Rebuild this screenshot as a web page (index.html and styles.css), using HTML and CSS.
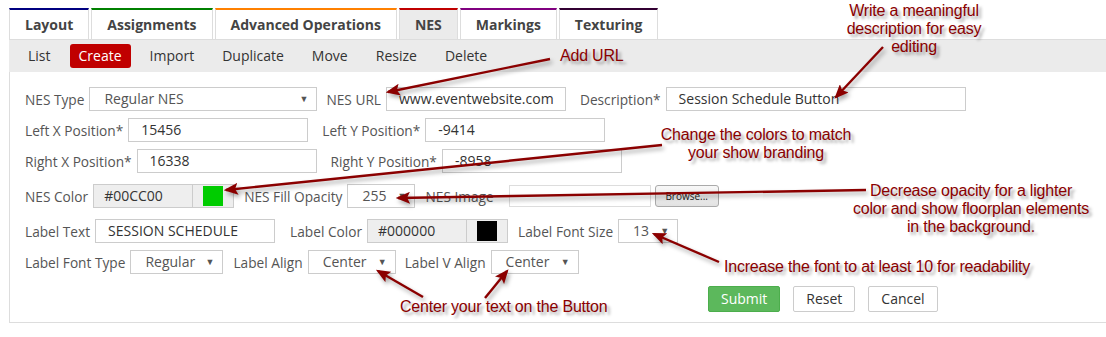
FILE: index.html
```html
<!DOCTYPE html>
<html lang="en">
<head>
    <meta charset="UTF-8">
    <meta name="viewport" content="width=device-width, initial-scale=1.0">
    <title>NES - Create</title>
    <link rel="stylesheet" href="styles.css">
</head>
<body>
    <div id="page">
        <div class="tabs">
            <div class="tab tab-layout">Layout</div>
            <div class="tab tab-assign">Assignments</div>
            <div class="tab tab-adv">Advanced Operations</div>
            <div class="tab tab-nes active">NES</div>
            <div class="tab tab-mark">Markings</div>
            <div class="tab tab-tex">Texturing</div>
        </div>

        <div class="subnav">
            <span class="sub-item">List</span>
            <span class="sub-item current">Create</span>
            <span class="sub-item">Import</span>
            <span class="sub-item">Duplicate</span>
            <span class="sub-item">Move</span>
            <span class="sub-item">Resize</span>
            <span class="sub-item">Delete</span>
        </div>

        <div class="panel">
            <div class="row">
                <label>NES Type</label>
                <div class="select w-type"><span>Regular NES</span><i class="caret">&#9660;</i></div>
                <label>NES URL</label>
                <div class="input w-url">www.eventwebsite.com</div>
                <label>Description*</label>
                <div class="input w-desc">Session Schedule Button</div>
            </div>

            <div class="row">
                <label>Left X Position*</label>
                <div class="input w-pos">15456</div>
                <label>Left Y Position*</label>
                <div class="input w-pos">-9414</div>
            </div>

            <div class="row row-gap">
                <label>Right X Position*</label>
                <div class="input w-pos">16338</div>
                <label>Right Y Position*</label>
                <div class="input w-pos">-8958</div>
            </div>

            <div class="row row-gap">
                <label>NES Color</label>
                <div class="color-box">
                    <span class="color-val">#00CC00</span>
                    <span class="color-cell"><i class="swatch green"></i></span>
                </div>
                <label>NES Fill Opacity</label>
                <div class="select w-opacity"><span>255</span><i class="caret">&#9660;</i></div>
                <label class="wide">NES Image</label>
                <div class="file-box"></div>
                <span class="browse">Browse...</span>
            </div>

            <div class="row">
                <label>Label Text</label>
                <div class="input w-text">SESSION SCHEDULE</div>
                <label>Label Color</label>
                <div class="color-box">
                    <span class="color-val">#000000</span>
                    <span class="color-cell"><i class="swatch black"></i></span>
                </div>
                <label>Label Font Size</label>
                <div class="select w-size"><span>13</span><i class="caret">&#9660;</i></div>
            </div>

            <div class="row">
                <label>Label Font Type</label>
                <div class="select w-ftype"><span>Regular</span><i class="caret">&#9660;</i></div>
                <label>Label Align</label>
                <div class="select w-align"><span>Center</span><i class="caret">&#9660;</i></div>
                <label>Label V Align</label>
                <div class="select w-align"><span>Center</span><i class="caret">&#9660;</i></div>
            </div>

            <div class="actions">
                <span class="btn btn-submit">Submit</span>
                <span class="btn">Reset</span>
                <span class="btn">Cancel</span>
            </div>
        </div>
    </div>

    <!-- help notes drawn over the form -->
    <svg class="arrows" width="1106" height="337" viewBox="0 0 1106 337">
        <defs>
            <marker id="head" markerWidth="6" markerHeight="5" refX="5" refY="2.5" orient="auto" markerUnits="strokeWidth">
                <path d="M0,0 L6,2.5 L0,5 L1.2,2.5 Z" fill="#8b0000"/>
            </marker>
        </defs>
        <g stroke="#8b0000" stroke-width="2.4" fill="none" marker-end="url(#head)">
            <line x1="550" y1="59" x2="388" y2="92"/>
            <line x1="883" y1="47" x2="836" y2="97"/>
            <line x1="662" y1="145" x2="226" y2="190"/>
            <line x1="866" y1="190" x2="398" y2="198"/>
            <line x1="719" y1="262" x2="654" y2="234"/>
            <line x1="423" y1="297" x2="378" y2="271"/>
            <line x1="485" y1="298" x2="507" y2="271"/>
        </g>
    </svg>

    <div class="note note-url">Add URL</div>
    <div class="note note-desc">Write a meaningful<br>description for easy<br>editing</div>
    <div class="note note-color">Change the colors to match<br>your show branding</div>
    <div class="note note-opacity">Decrease opacity for a lighter<br>color and show floorplan elements<br>in the background.</div>
    <div class="note note-font">Increase the font to at least 10 for readability</div>
    <div class="note note-center">Center your text on the Button</div>
</body>
</html>
```

FILE: styles.css
```css
body {
    font-family: 'Open Sans', 'Noto Sans', sans-serif;
    font-size: 14px;
    color: #333;
    background-color: #fff;
    margin: 0;
    padding: 0;
    position: relative;
    width: 1106px;
    height: 337px;
    overflow: hidden;
}

#page {
    padding: 8px 0 0 9px;
}

/* top tabs */
.tabs {
    display: flex;
    gap: 2px;
}

.tab {
    height: 29px;
    line-height: 29px;
    padding: 0 15px;
    font-weight: bold;
    color: #444;
    background-color: #fff;
    border-top: 2px solid #000;
    border-left: 1px solid #ddd;
    border-right: 1px solid #ddd;
}

.tab.active {
    background-color: #ebebeb;
}

.tab-layout { border-top-color: #000080; }
.tab-assign { border-top-color: #008000; }
.tab-adv { border-top-color: #ff8000; }
.tab-nes { border-top-color: #c00000; }
.tab-mark { border-top-color: #800080; }
.tab-tex { border-top-color: #330033; }

/* sub navigation */
.subnav {
    display: flex;
    align-items: center;
    gap: 10px;
    height: 32px;
    padding-left: 10px;
    background-color: #ebebeb;
    border-top: 1px solid #ddd;
}

.sub-item {
    padding: 0 9px;
    height: 24px;
    line-height: 24px;
    color: #333;
}

.sub-item.current {
    background-color: #c00000;
    color: #fff;
    border-radius: 3px;
}

/* form panel */
.panel {
    border-left: 1px solid #ddd;
    border-bottom: 1px solid #ddd;
    padding: 15px 0 10px 15px;
}

.row {
    display: flex;
    align-items: center;
    height: 24px;
    margin-bottom: 7px;
}

.row-gap {
    margin-bottom: 11px;
}

.row label {
    font-size: 13.7px;
    color: #555;
    margin-right: 5px;
    white-space: nowrap;
}

.row label.wide {
    margin-right: 15px;
}

.input,
.select {
    box-sizing: border-box;
    height: 24px;
    line-height: 22px;
    border: 1px solid #ccc;
    background-color: #fff;
    padding: 0 12px;
    margin-right: 10px;
    white-space: nowrap;
    overflow: hidden;
}

.select {
    display: flex;
    justify-content: space-between;
    padding: 0 8px 0 14px;
    color: #555;
}

.caret {
    font-style: normal;
    font-size: 9px;
    color: #555;
}

.w-type { width: 228px; margin-right: 9px; }
.w-url { width: 180px; margin-right: 14px; }
.w-desc { width: 300px; }
.w-pos { width: 180px; margin-right: 14px; }
.w-text { width: 180px; margin-right: 15px; }
.w-opacity { width: 68px; }
.w-size { width: 60px; }
.w-ftype { width: 93px; }
.w-align { width: 88px; margin-right: 9px; }

.color-box {
    box-sizing: border-box;
    display: flex;
    width: 141px;
    height: 24px;
    border: 1px solid #ccc;
    background-color: #eee;
    margin-right: 10px;
}

.color-val {
    width: 99px;
    line-height: 22px;
    padding-left: 10px;
    box-sizing: border-box;
    border-right: 1px solid #ccc;
}

.color-cell {
    flex: 1;
    display: flex;
    align-items: center;
    justify-content: center;
}

.swatch {
    width: 20px;
    height: 20px;
}

.swatch.green { background-color: #00cc00; }
.swatch.black { background-color: #000; }

.file-box {
    width: 142px;
    height: 22px;
    box-sizing: border-box;
    border: 1px solid #ddd;
    margin-right: 4px;
}

.browse {
    box-sizing: border-box;
    width: 64px;
    height: 22px;
    line-height: 20px;
    text-align: center;
    font-size: 10px;
    color: #222;
    border: 1px solid #aaa;
    border-radius: 3px;
    background: linear-gradient(#f8f8f8, #e2e2e2);
}

.actions {
    display: flex;
    gap: 13px;
    padding-left: 683px;
    margin-top: 12px;
}

.btn {
    box-sizing: border-box;
    height: 26px;
    line-height: 24px;
    padding: 0 12px;
    border: 1px solid #ccc;
    border-radius: 2px;
    color: #333;
    background-color: #fff;
}

.btn-submit {
    background-color: #5cb85c;
    border-color: #4cae4c;
    color: #fff;
}

/* annotation overlay */
.arrows {
    position: absolute;
    top: 0;
    left: 0;
    pointer-events: none;
    filter: drop-shadow(2px 3px 2px rgba(0, 0, 0, 0.35));
}

.note {
    position: absolute;
    font-family: 'Liberation Sans', Arial, sans-serif;
    font-size: 16px;
    line-height: 18px;
    letter-spacing: -0.2px;
    color: #8b0000;
    text-shadow: 3px 3px 3px rgba(0, 0, 0, 0.35);
    white-space: nowrap;
}

.note-url { left: 560px; top: 47px; }
.note-desc { left: 834px; top: 2px; width: 160px; text-align: center; }
.note-color { left: 656px; top: 126px; width: 200px; text-align: center; }
.note-opacity { left: 851px; top: 182px; width: 240px; text-align: center; }
.note-font { left: 724px; top: 258px; }
.note-center { left: 400px; top: 298px; }
```
